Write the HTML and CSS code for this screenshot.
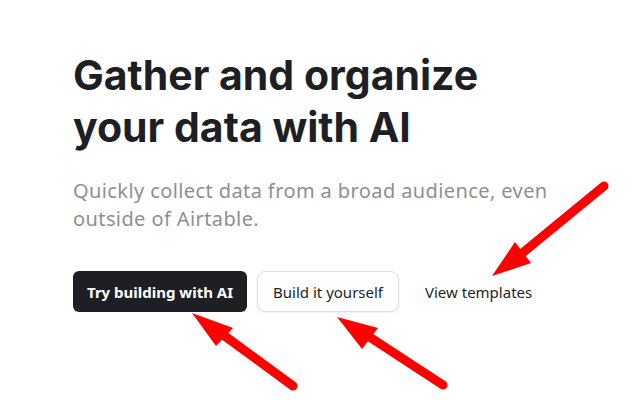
FILE: index.html
```html
<!DOCTYPE html>
<html>
<head>
    <title>Gather and organize your data with AI</title>
    <link rel="stylesheet" href="styles.css">
</head>
<body>
    <div class="hero">
        <h1 class="hero-title">Gather and organize your data with AI</h1>
        <p class="hero-subtitle">Quickly collect data from a broad audience, even outside of Airtable.</p>
        <div class="hero-actions">
            <button class="btn btn-primary">Try building with AI</button>
            <button class="btn btn-secondary">Build it yourself</button>
            <a class="btn btn-link" href="#">View templates</a>
        </div>
    </div>

    <svg class="annotations" width="630" height="400" viewBox="0 0 630 400">
        <g stroke="#ff0000" stroke-width="9" stroke-linecap="round" fill="#ff0000">
            <line x1="293" y1="386" x2="222" y2="334"/>
            <line x1="443" y1="385" x2="368" y2="336"/>
            <line x1="604" y1="186" x2="520" y2="255"/>
        </g>
        <g fill="#ff0000">
            <polygon points="192,313 233,328 216,346"/>
            <polygon points="337,317 378,328 362,349"/>
            <polygon points="492,276 515,242 531,263"/>
        </g>
    </svg>
</body>
</html>
```

FILE: styles.css
```css
body {
    margin: 0;
    background-color: #ffffff;
    font-family: "Noto Sans", "Open Sans", sans-serif;
    color: #1d1f25;
    position: relative;
    min-height: 400px;
}
.hero {
    padding: 49px 0 0 73px;
    width: 520px;
}
.hero-title {
    margin: 0;
    font-family: Inter, "Noto Sans", sans-serif;
    font-size: 41px;
    line-height: 52px;
    font-weight: 700;
    letter-spacing: 0;
    color: #1d1f25;
    width: 440px;
}
.hero-subtitle {
    margin: 24px 0 0 0;
    font-size: 20px;
    line-height: 28px;
    letter-spacing: 0.4px;
    color: #8f8f8f;
    width: 500px;
}
.hero-actions {
    display: flex;
    align-items: center;
    gap: 10px;
    margin-top: 38px;
}
.btn {
    font-family: "Noto Sans", "Open Sans", sans-serif;
    font-size: 15px;
    height: 41px;
    padding: 0 15px;
    border-radius: 6px;
    cursor: pointer;
    box-sizing: border-box;
    display: flex;
    align-items: center;
}
.btn-primary {
    background-color: #1d1f25;
    color: #ffffff;
    border: none;
    font-weight: 700;
    padding: 0 14px;
}
.btn-secondary {
    background-color: #ffffff;
    color: #1d1f25;
    border: 1px solid #e0e0e0;
    border-radius: 8px;
    box-shadow: 0 1px 2px rgba(0,0,0,0.06);
}
.btn-link {
    color: #1d1f25;
    text-decoration: none;
    padding: 0 16px;
}
.annotations {
    position: absolute;
    top: 0;
    left: 0;
    pointer-events: none;
}
```
